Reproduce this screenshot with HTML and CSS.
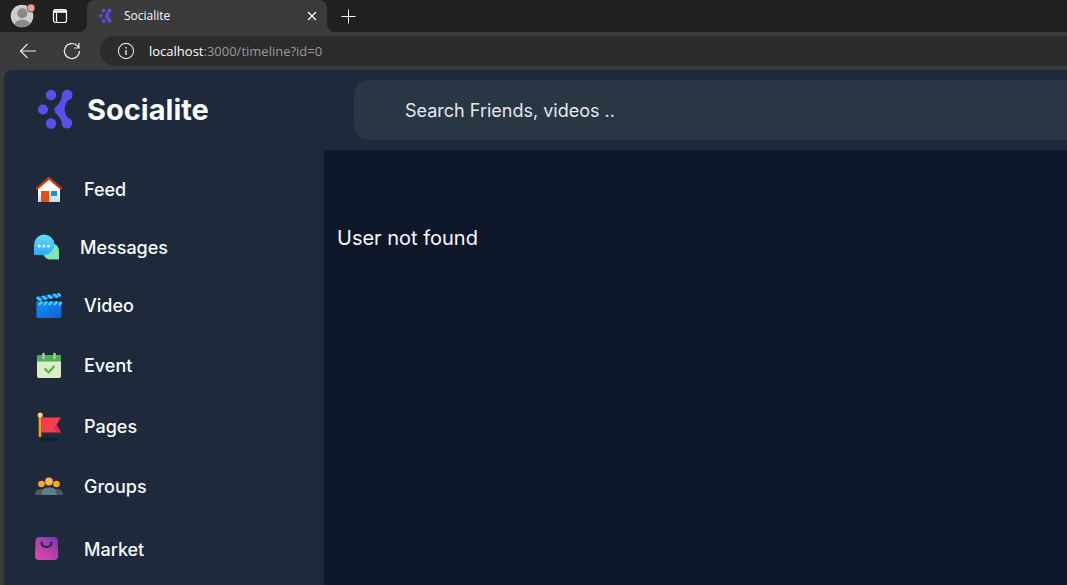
FILE: index.html
```
<!DOCTYPE html>
<html lang="en">
<head>
<meta charset="utf-8">
<meta name="viewport" content="width=device-width, initial-scale=1">
<title>Socialite</title>
<link rel="stylesheet" href="styles.css">
</head>
<body>
<svg class="defs" width="0" height="0" aria-hidden="true">
  <defs>
    <symbol id="mark" viewBox="0 0 36 42">
      <circle cx="5" cy="20.500" r="5"/><circle cx="13" cy="6" r="5.200"/><circle cx="13" cy="34.500" r="5.200"/>
      <path d="M29 .8a5.200 5.200 0 0 1 2.200 10c-2.200 1.200-3.200 3.400-4 6.200-.8 2.300-.8 4.400 0 6.600.8 2.800 1.800 4.800 4 6a5.200 5.200 0 1 1-7.400 4.800c0-3.400-2-5.600-4.200-8.600a5 5 0 0 1-2.600-2.400 5.200 5.200 0 0 1 2-6.600c2.800-3.400 4.800-6.600 4.800-10.400a5.400 5.400 0 0 1 5.200-5.600z"/>
    </symbol>
  </defs>
</svg>
<div class="browser">
  <div class="tabstrip">
    <div class="window-tools">
      <button class="chrome-button" aria-label="Profile">
        <svg width="26" height="26" viewBox="0 0 26 26"><defs><clipPath id="face"><circle cx="12" cy="13" r="11.300"/></clipPath></defs><circle cx="12" cy="13" r="11.300" fill="#cfcdca"/><g clip-path="url(#face)" fill="#8b8987"><circle cx="12.300" cy="10.200" r="5"/><ellipse cx="12.300" cy="22.500" rx="8" ry="6"/></g><circle cx="21" cy="5" r="4" fill="#f99b98" stroke="#202020" stroke-width=".6"/></svg>
      </button>
      <button class="chrome-button" aria-label="Tab actions">
        <svg width="16" height="16" viewBox="0 0 16 16" fill="none" stroke="#fff"><rect x="1.500" y="1.500" width="13" height="13" rx="2.200" stroke-width="1.200"/><path d="M4.500 4v10" stroke-width="1.200"/><path d="M2 3.500h12" stroke-width="2.500"/></svg>
      </button>
    </div>
    <div class="tab">
      <svg class="favicon" width="13" height="16"><use href="#mark"/></svg>
      <span class="tab-title">Socialite</span>
      <button class="chrome-button" aria-label="Close tab">
        <svg width="10" height="10" viewBox="0 0 10 10" stroke="#fff" stroke-width="1.200"><path d="M1 1l8 8M9 1L1 9"/></svg>
      </button>
    </div>
    <button class="chrome-button new-tab" aria-label="New tab">
      <svg width="15" height="15" viewBox="0 0 15 15" stroke="#fff"><path d="M7.500.5v14M.5 7.500h14"/></svg>
    </button>
  </div>
  <div class="toolbar">
    <button class="chrome-button" aria-label="Back">
      <svg width="18" height="16" viewBox="0 0 18 16" fill="none" stroke="#eee" stroke-width="1.100"><path d="M8.500 1L1.500 8l7 7M1.500 8H17"/></svg>
    </button>
    <button class="chrome-button" aria-label="Reload">
      <svg width="18" height="18" viewBox="0 0 18 18" fill="none" stroke="#eee" stroke-width="1.200"><path d="M16.400 9a7.500 7.500 0 1 1-2.300-5.400L15.800 5.500M15.900 1v5h-5"/></svg>
    </button>
    <div class="address">
      <svg width="18" height="18" viewBox="0 0 18 18" fill="none" stroke="#ddd"><circle cx="9" cy="9" r="7.600" stroke-width="1.100"/><path d="M9 8v5M9 5v1.500" stroke-width="1.500"/></svg>
      <span class="url"><span class="host">localhost</span>:3000/timeline?id=0</span>
    </div>
  </div>
  <div class="page">
    <header class="header">
      <a class="brand" href="#"><svg class="logo" width="36" height="42"><use href="#mark"/></svg>Socialite</a>
      <input class="search" type="text" placeholder="Search Friends, videos .." aria-label="Search Friends, videos">
    </header>
    <div class="body">
      <nav class="sidebar">
        <a class="item compact" href="#">
          <svg width="26" height="26" viewBox="0 0 26 26"><defs><linearGradient id="wall" x2="0" y2="1"><stop offset=".6" stop-color="#fff"/><stop offset="1" stop-color="#cbd5e1"/></linearGradient></defs><path d="M2 11L13 2l11 9v15H2z" fill="url(#wall)"/><path d="M5 15h8v11H5z" fill="#e2500f"/><path d="M15 15h6v5h-6z" fill="#1593e0"/><path d="M1 12.500L13 2l12 10.500" fill="none" stroke="#c93a0b" stroke-width="2.400" stroke-linecap="round"/></svg>
          <span>Feed</span>
        </a>
        <a class="item compact outdent" href="#">
          <svg width="26" height="26" viewBox="0 0 26 26"><defs><linearGradient id="bubble" x2="0" y2="1"><stop stop-color="#62dcfa"/><stop offset="1" stop-color="#2cabff"/></linearGradient></defs><path d="M25 17v8.500h-8c-5 0-8-3-8-8s3-8 8-8 8 3 8 7.500z" fill="#80e5b0"/><path d="M0 21V11.500a10.200 10.200 0 1 1 10.200 9.500z" fill="url(#bubble)"/><g fill="#fff"><circle cx="5.200" cy="12" r="1.500"/><circle cx="9.800" cy="12" r="1.500"/><circle cx="14.400" cy="12" r="1.500"/></g></svg>
          <span>Messages</span>
        </a>
        <a class="item compact" href="#">
          <svg width="26" height="26" viewBox="0 0 26 26"><defs><linearGradient id="clap" x2="1" y2="1"><stop stop-color="#1294f6"/><stop offset="1" stop-color="#155bd5"/></linearGradient></defs><path d="M.5 9.500h25v15q0 1.500-1.500 1.500H2Q.5 26 .5 24.500z" fill="url(#clap)"/><path d="M0 5L24 1l1 4L1 9z" fill="#116ad8"/><path d="M1 5l4 3.300M6.500 4l4 3.400M12 3l4 3.400M17.500 2l4 3.400M22 1.500l2.500 2.500M3 13l3-3.500M8 13l3-3.500M13 13l3-3.500M18 13l3-3.500M23 13l2.500-3" stroke="#48d5fc" stroke-width="2.200"/></svg>
          <span>Video</span>
        </a>
        <a class="item roomy" href="#">
          <svg width="26" height="26" viewBox="0 0 26 26"><rect x="1" y="3" width="24" height="23" rx="2" fill="#dcedc8"/><path d="M1 9.500V5q0-2 2-2h20q2 0 2 2v4.500z" fill="#4caf50"/><path d="M7.500 2v4M18.500 2v4" stroke="#b0bec5" stroke-width="2.600" stroke-linecap="round"/><path d="M8.500 16.500l4 4 6-6.500" fill="none" stroke="#4caf50" stroke-width="2.200"/></svg>
          <span>Event</span>
        </a>
        <a class="item" href="#">
          <svg width="26" height="30" viewBox="0 0 26 30"><ellipse cx="13" cy="28.500" rx="9" ry="1.500" fill="#151e30"/><path d="M4 4.500v21.500" stroke="#f3a01a" stroke-width="2.600"/><circle cx="4.200" cy="4" r="2.600" fill="#ffd078"/><path d="M5.300 6.500H25l-4.500 7.500L25 21.500H5.300z" fill="#f83d51"/><path d="M17 16l3.800-2L25 21.500h-4z" fill="#d6324c"/></svg>
          <span>Pages</span>
        </a>
        <a class="item" href="#">
          <svg width="26" height="18" viewBox="1 0 26 18"><path d="M0 18c0-5 2.500-6 7-6s7 1 7 6zM14 18c0-5 2.500-6 7-6s7 1 7 6z" fill="#455a64"/><circle cx="6.500" cy="7" r="3.300" fill="#ffa726"/><circle cx="21.500" cy="7" r="3.300" fill="#ffa726"/><circle cx="14" cy="4.500" r="3.900" fill="#ffb74d"/><path d="M6.500 18c0-6 2.500-7.500 7.500-7.500s7.500 1.500 7.500 7.500z" fill="#607d8b"/></svg>
          <span>Groups</span>
        </a>
        <a class="item tall" href="#">
          <svg width="26" height="26" viewBox="1 1 26 26"><defs><linearGradient id="bag" x1="0" y1="1" x2="1" y2="0"><stop stop-color="#e44ba7"/><stop offset="1" stop-color="#7b35b2"/></linearGradient></defs><path d="M4 2h15q3.500 0 3.700 3.500l.5 15.500q0 4-4 4H4q-4 0-4-4L.5 5.500Q.7 2 4 2z" fill="url(#bag)"/><path d="M6.500 7.500c0 6 10 6 10 0" fill="none" stroke="#202a40" stroke-width="2" stroke-linecap="round"/></svg>
          <span>Market</span>
        </a>
      </nav>
      <main class="content"><p class="notice">User not found</p></main>
    </div>
  </div>
</div>
</body>
</html>
```
FILE: styles.css
```
* { box-sizing: border-box; }
body { margin: 0; overflow: hidden; background: #3b3b3b; color: #f8fafc; font-family: Inter, "Liberation Sans", sans-serif; }
a { color: inherit; text-decoration: none; }
svg { flex: none; display: block; overflow: visible; }
.defs { position: absolute; }
.browser { display: flex; flex-direction: column; height: 100vh; }
.tabstrip { display: flex; flex: none; height: 32px; background: #3b3b3b; font-family: "Open Sans", "Noto Sans", sans-serif; }
.window-tools { display: flex; align-items: center; gap: 16px; width: 87px; padding-left: 10px; background: #202020; border-bottom-right-radius: 8px; }
.chrome-button { display: flex; align-items: center; justify-content: center; padding: 0; border: 0; background: transparent; color: inherit; }
.tab { display: flex; align-items: center; gap: 12px; width: 240px; padding: 0 10px 0 12px; background: #3b3b3b; border-radius: 8px 8px 0 0; box-shadow: 0 -8px 0 #202020; }
.favicon, .logo { fill: #5850ec; }
.tab-title { flex: 1; font-size: 12px; line-height: 16px; }
.new-tab { flex: 1; justify-content: flex-start; padding-left: 14px; background: #202020; border-bottom-left-radius: 8px; }
.toolbar { display: flex; align-items: center; flex: none; gap: 26px; height: 38px; padding-left: 19px; background: #3b3b3b; }
.address { display: flex; align-items: center; flex: 1; gap: 14px; height: 30px; margin-left: -7px; padding-left: 17px; border-radius: 15px 0 0 15px; background: #2b2b2b; font-family: "Open Sans", "Noto Sans", sans-serif; }
.url { font-size: 13px; color: #999; }
.host { color: #fff; }
.page { display: flex; flex-direction: column; flex: 1; min-height: 0; margin-left: 4px; border-top-left-radius: 8px; background: #1e293b; overflow: hidden; }
.header { display: flex; align-items: center; flex: none; height: 80px; }
.brand { display: flex; align-items: center; gap: 13px; width: 350px; padding-left: 34px; font-size: 29px; font-weight: 700; line-height: 34px; }
.search { flex: 1; min-width: 0; height: 60px; padding: 0 51px; border: 0; border-radius: 15px 0 0 15px; outline: 0; background: #293644; color: #fff; font-family: inherit; font-size: 18px; }
.search::placeholder { color: #e6e8ea; opacity: 1; }
.body { display: flex; flex: 1; min-height: 0; }
.sidebar { width: 320px; flex: none; padding: 10px 32px; }
.item { display: flex; align-items: center; gap: 22px; height: 60px; font-size: 18px; font-weight: 500; }
.compact { height: 58px; }
.roomy { height: 62px; }
.tall { height: 66px; }
.outdent { gap: 20px; margin-left: -2px; }
.content { flex: 1; padding: 72px 13px; background: #0f172a; }
.notice { margin: 0; font-size: 20px; line-height: 32px; }
```
